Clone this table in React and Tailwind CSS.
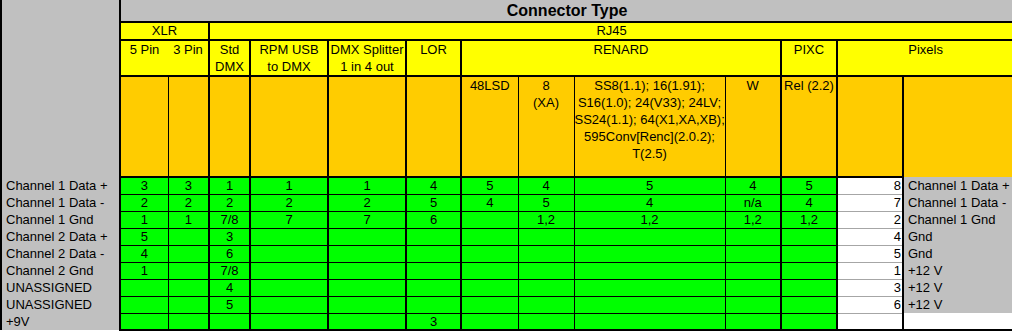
import React from 'react'

const RENARD_NOTE = [
  'SS8(1.1); 16(1.91);',
  'S16(1.0); 24(V33); 24LV;',
  'SS24(1.1); 64(X1,XA,XB);',
  '595Conv[Renc](2.0.2);',
  'T(2.5)'
]

// right border of every data column, left to right (thin = Excel "thin", 2 = "medium")
const COL_EDGE = [
  'border-r', 'border-r-2', 'border-r-2', 'border-r-2', 'border-r-2', 'border-r-2',
  'border-r', 'border-r', 'border-r', 'border-r-2', 'border-r-2'
]

const ROWS = [
  { label: 'Channel 1 Data +', pins: ['3', '3', '1', '1', '1', '4', '5', '4', '5', '4', '5'], pixel: '8', pixelLabel: 'Channel 1 Data +' },
  { label: 'Channel 1 Data -', pins: ['2', '2', '2', '2', '2', '5', '4', '5', '4', 'n/a', '4'], pixel: '7', pixelLabel: 'Channel 1 Data -' },
  { label: 'Channel 1 Gnd', pins: ['1', '1', '7/8', '7', '7', '6', '', '1,2', '1,2', '1,2', '1,2'], pixel: '2', pixelLabel: 'Channel 1 Gnd' },
  { label: 'Channel 2 Data +', pins: ['5', '', '3'], pixel: '4', pixelLabel: 'Gnd' },
  { label: 'Channel 2 Data -', pins: ['4', '', '6'], pixel: '5', pixelLabel: 'Gnd' },
  { label: 'Channel 2 Gnd', pins: ['1', '', '7/8'], pixel: '1', pixelLabel: '+12 V' },
  { label: 'UNASSIGNED', pins: ['', '', '4'], pixel: '3', pixelLabel: '+12 V' },
  { label: 'UNASSIGNED', pins: ['', '', '5'], pixel: '6', pixelLabel: '+12 V' },
  { label: '+9V', pins: ['', '', '', '', '', '3'], pixel: '', pixelLabel: '' }
]

export default function App() {
  return (
    <div className="w-[1012px] h-[332px] overflow-hidden bg-white text-black font-['Liberation_Sans',Arial,sans-serif] text-[13px]">
      <table className="table-fixed border-collapse w-[1012px]">
        <colgroup>
          <col className="w-[119px]" />
          <col className="w-[48px]" />
          <col className="w-[41px]" />
          <col className="w-[41px]" />
          <col className="w-[78px]" />
          <col className="w-[78px]" />
          <col className="w-[55px]" />
          <col className="w-[57px]" />
          <col className="w-[56px]" />
          <col className="w-[151px]" />
          <col className="w-[56px]" />
          <col className="w-[56px]" />
          <col className="w-[66px]" />
          <col className="w-[110px]" />
        </colgroup>
        <tbody>
          {/* Title */}
          <tr className="h-[22px]">
            <td rowSpan={4} className="bg-[#c0c0c0] border-l-2 border-r-2 p-0" />
            <td colSpan={13} className="bg-[#c0c0c0] border-b-2 p-0 text-center align-middle text-[16px] font-bold leading-[20px]">
              Connector Type
            </td>
          </tr>

          {/* Connector family */}
          <tr className="h-[18px] bg-[#ffff00] leading-[16px] text-center">
            <td colSpan={2} className="border-r-2 border-b-2 p-0 align-middle">XLR</td>
            <td colSpan={11} className="border-b-2 p-0 align-middle">RJ45</td>
          </tr>

          {/* Device */}
          <tr className="h-[36px] bg-[#ffff00] leading-[17px] text-center align-top">
            <td className="border-b-2 p-0 align-top whitespace-nowrap">5 Pin</td>
            <td className="border-r-2 border-b-2 p-0 align-top whitespace-nowrap">3 Pin</td>
            <td className="border-r-2 border-b-2 p-0 align-top">Std<br />DMX</td>
            <td className="border-r-2 border-b-2 p-0 align-top whitespace-nowrap">RPM USB<br />to DMX</td>
            <td className="border-r-2 border-b-2 p-0 align-top whitespace-nowrap">DMX Splitter<br />1 in 4 out</td>
            <td className="border-r-2 border-b-2 p-0 align-top">LOR</td>
            <td colSpan={4} className="border-r-2 border-b-2 p-0 align-top">RENARD</td>
            <td className="border-r-2 border-b-2 p-0 align-top">PIXC</td>
            <td colSpan={2} className="border-b-2 p-0 align-top">Pixels</td>
          </tr>

          {/* Model */}
          <tr className="h-[101px] bg-[#ffcc00] leading-[17px] text-center">
            <td className="border-r border-b-2 p-0" />
            <td className="border-r-2 border-b-2 p-0" />
            <td className="border-r-2 border-b-2 p-0" />
            <td className="border-r-2 border-b-2 p-0" />
            <td className="border-r-2 border-b-2 p-0" />
            <td className="border-r-2 border-b-2 p-0" />
            <td className="border-r border-b-2 p-0 align-top">48LSD</td>
            <td className="border-r border-b-2 p-0 align-top">8<br />(XA)</td>
            <td className="border-r border-b-2 p-0 align-top whitespace-nowrap">
              {RENARD_NOTE.map(line => (
                <div key={line}>{line}</div>
              ))}
            </td>
            <td className="border-r-2 border-b-2 p-0 align-top">W</td>
            <td className="border-r-2 border-b-2 p-0 align-top whitespace-nowrap">Rel (2.2)</td>
            <td className="border-r-2 border-b-2 p-0" />
            <td className="p-0" />
          </tr>

          {/* Pin assignments */}
          {ROWS.map((row, i) => {
            const last = i === ROWS.length - 1
            return (
              <tr key={i} className="h-[17px] leading-[15px]">
                <td className="bg-[#c0c0c0] border-l-2 border-r-2 pl-[4px] p-0 whitespace-nowrap align-middle">
                  {row.label}
                </td>
                {COL_EDGE.map((edge, c) => (
                  <td
                    key={c}
                    className={`bg-[#00ff00] p-0 text-center align-middle whitespace-nowrap ${edge} ${last ? 'border-b-2' : 'border-b'}`}
                  >
                    {row.pins[c] || ''}
                  </td>
                ))}
                <td className={`bg-white border-r-2 p-0 pr-[1px] text-right align-middle ${last ? 'border-b-2' : 'border-b border-b-[#a6a6a6]'}`}>
                  {row.pixel}
                </td>
                <td className={`p-0 pl-[4px] align-middle whitespace-nowrap ${last ? 'bg-white border-b-2' : 'bg-[#c0c0c0]'}`}>
                  {row.pixelLabel}
                </td>
              </tr>
            )
          })}
        </tbody>
      </table>
    </div>
  )
}
